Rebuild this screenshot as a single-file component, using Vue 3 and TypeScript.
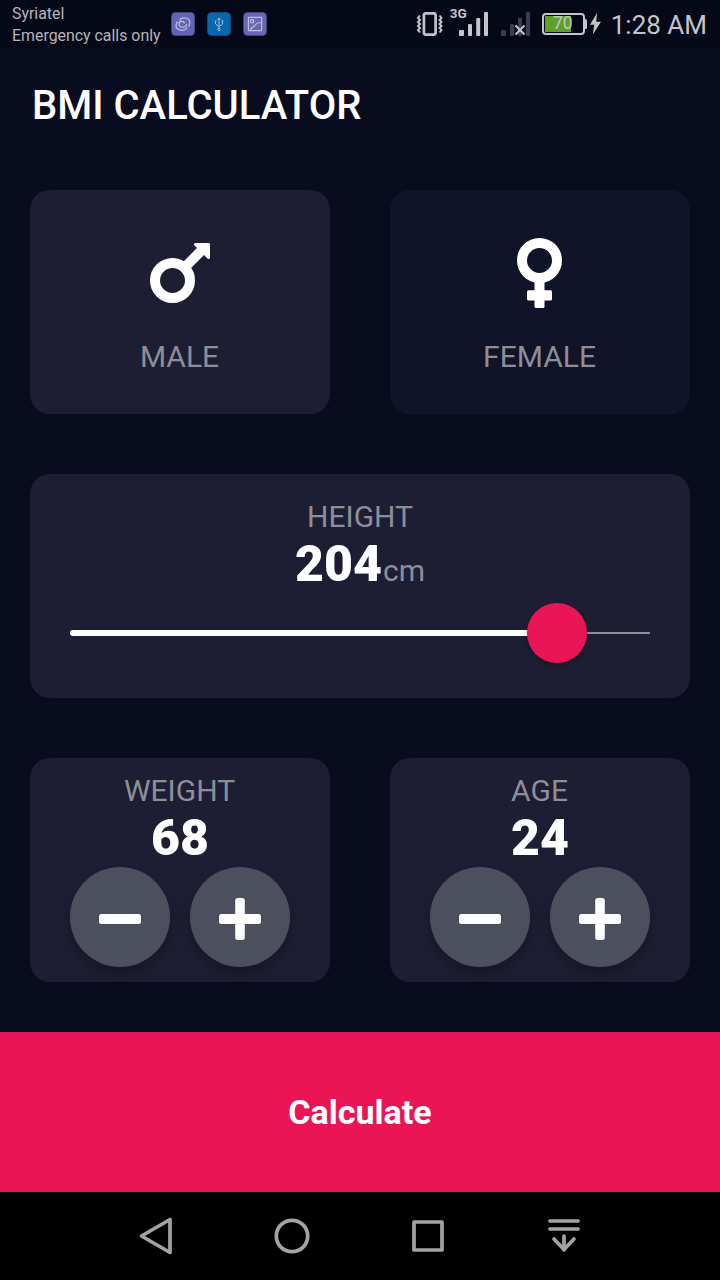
<script setup lang="ts">
import { computed, ref } from 'vue'

type Gender = 'male' | 'female'

const gender = ref<Gender>('male')
const height = ref(204)
const counters = ref([
  { label: 'WEIGHT', value: 68 },
  { label: 'AGE', value: 24 },
])

const minHeight = 120
const maxHeight = 220
const progress = computed(
  () => ((height.value - minHeight) / (maxHeight - minHeight)) * 100,
)
</script>

<template>
  <div class="screen">
    <header class="status">
      <div class="carrier">
        <span>Syriatel</span>
        <span>Emergency calls only</span>
      </div>
      <div class="notices">
        <svg width="24" height="24" viewBox="0 0 24 24" fill="none" stroke="#c1bde0" stroke-width="1.2">
          <rect x=".5" y=".5" width="23" height="23" rx="4" fill="#6265b4" stroke="#464782" stroke-width="1" />
          <path d="M15.500 12c0 2-1.700 3.200-3.700 3.200-2.200 0-3.800-1.400-3.800-3.200 0-1.500 1.200-2.600 2.800-2.600 1.500 0 2.600.9 2.600 2.200" />
          <path d="M8.500 8.500C9.500 6.500 12 5.500 14.500 6c3 .6 4.700 3 4.300 5.600-.2 1.300-.8 2.300-1.600 3" />
          <path d="M16 15.500c-1.500 2.500-4.500 3.300-7.200 2.400-3-1-4.300-3.500-3.500-6 .3-1 .8-1.800 1.500-2.400" />
        </svg>
        <svg width="24" height="24" viewBox="0 0 24 24" fill="none" stroke="#9cbfdd" stroke-width="1">
          <rect x=".5" y=".5" width="23" height="23" rx="4" fill="#0868ae" stroke="#124779" />
          <path d="M12 6v10.500M8.500 9.500v2.500L12 14.500l3.500-2.500V9.500M10.500 8 12 6l1.500 2" />
          <circle cx="12" cy="17.500" r="1.300" />
          <path d="M7.500 9h2M14.500 9h2" />
        </svg>
        <svg width="24" height="24" viewBox="0 0 24 24" fill="none" stroke="#c1bddd" stroke-width="1.200">
          <rect x=".5" y=".5" width="23" height="23" rx="4" fill="#6b67b6" stroke="#47447d" stroke-width="1" />
          <rect x="5.400" y="5.400" width="13.200" height="13.200" rx=".5" />
          <circle cx="9" cy="9.300" r="1.700" />
          <path d="M7.500 18c.5-2 1.500-3 3.500-3.300 1.500-2.700 3.500-4 7-4.200" />
        </svg>
      </div>
      <div class="system">
        <svg class="vibrate" width="28" height="26" viewBox="0 0 28 26" fill="none" stroke="#c3c5c9">
          <rect x="7.900" y="2.400" width="11.700" height="21.200" rx="2" stroke-width="2.700" />
          <path d="M4 4.500 2 7l2 2-2 2 2 2-2 2 2 2-2 2 2 2.500M23.500 4.500l2 2.500-2 2 2 2-2 2 2 2-2 2 2 2-2 2.500" stroke-width="2" />
        </svg>
        <div class="network">
          <span class="generation">3G</span>
          <svg width="30" height="24" viewBox="0 0 30 24" fill="#c3c5c9">
            <rect y="18" width="5" height="6" rx="1" />
            <rect x="9" y="12" width="4" height="12" rx="1" />
            <rect x="17.200" y="6" width="4" height="18" rx="1" />
            <rect x="25" width="4" height="24" rx="1" />
          </svg>
        </div>
        <svg class="nosim" width="30" height="24" viewBox="0 0 30 24" fill="#3b3d4d">
          <rect y="18" width="5" height="6" rx="1" />
          <rect x="9" y="12" width="4" height="12" rx="1" />
          <rect x="17" y="6" width="4" height="18" rx="1" />
          <rect x="25" width="4" height="24" rx="1" />
          <path d="m14.500 13.500 9 9m0-9-9 9" stroke="#c3c5c9" stroke-width="2" />
        </svg>
        <div class="battery">
          <svg width="45" height="22" viewBox="0 0 45 22">
            <rect x="1" y="1" width="41" height="20" rx="3" fill="none" stroke="#c3c5c9" stroke-width="2" />
            <rect x="3" y="3" width="26" height="16" fill="#5fa125" />
            <path d="M42 6h1.500q1.500 0 1.500 1.500v7q0 1.500-1.500 1.500H42z" fill="#c3c5c9" />
          </svg>
          <span class="percent">70</span>
        </div>
        <svg class="bolt" width="11" height="22" viewBox="0 0 11 22" fill="#c3c5c9">
          <path d="M7 0 0 11.800h4.200L2.800 21.500 11 8.800H6.200z" />
        </svg>
        <span class="clock">1:28 AM</span>
      </div>
    </header>

    <h1 class="title">BMI CALCULATOR</h1>

    <main class="body">
      <section class="row">
        <div class="card choice" :class="{ dim: gender !== 'male' }" @click="gender = 'male'">
          <svg width="80" height="80" viewBox="0 0 80 80" fill="#fff">
            <circle cx="32.500" cy="47.500" r="17.500" fill="none" stroke="#fff" stroke-width="10" />
            <path d="M55.300 10H69q1 0 1 1v13.700q0 1.300-1.300 1.300-.7 0-1.200-.5L64 22 48.500 37.500l-7-7L57 15l-2.700-2.700q-.6-.6-.3-1.300.3-1 1.300-1z" />
          </svg>
          <span class="label">MALE</span>
        </div>
        <div class="card choice" :class="{ dim: gender !== 'female' }" @click="gender = 'female'">
          <svg width="80" height="80" viewBox="0 0 80 80" fill="#fff">
            <circle cx="39.500" cy="27.500" r="17.500" fill="none" stroke="#fff" stroke-width="10" />
            <rect x="34.500" y="46" width="10" height="29" rx="1.500" />
            <rect x="27" y="57.300" width="25" height="10.300" rx="1.500" />
          </svg>
          <span class="label">FEMALE</span>
        </div>
      </section>

      <section class="card height">
        <span class="label">HEIGHT</span>
        <div class="reading">
          <span class="number">{{ height }}</span><span class="label">cm</span>
        </div>
        <div class="slider">
          <div class="filled" :style="{ width: progress + '%' }">
            <span class="thumb"></span>
          </div>
        </div>
      </section>

      <section class="row">
        <div v-for="item in counters" :key="item.label" class="card counter">
          <span class="label">{{ item.label }}</span>
          <span class="number">{{ item.value }}</span>
          <div class="buttons">
            <button type="button" @click="item.value--">
              <svg width="42" height="42" viewBox="0 0 42 42" fill="#fff">
                <rect y="16" width="42" height="10" rx="2.500" />
              </svg>
            </button>
            <button type="button" @click="item.value++">
              <svg width="42" height="42" viewBox="0 0 42 42" fill="#fff">
                <rect y="16" width="42" height="10" rx="2.500" />
                <rect x="16.200" width="9.600" height="42" rx="2.500" />
              </svg>
            </button>
          </div>
        </div>
      </section>
    </main>

    <button type="button" class="calculate">Calculate</button>

    <nav class="navbar">
      <svg width="40" height="40" viewBox="0 0 40 40"><path d="M34 3.500v33L5.500 20z" /></svg>
      <svg width="40" height="40" viewBox="0 0 40 40"><circle cx="20" cy="20" r="15.700" /></svg>
      <svg width="40" height="40" viewBox="0 0 40 40"><rect x="6" y="6" width="28" height="28" /></svg>
      <svg width="40" height="40" viewBox="0 0 40 40" stroke-linecap="round">
        <path d="M6 5h28M6 13h28M20 20v14M10 23l10 10.500L30 23" />
      </svg>
    </nav>
  </div>
</template>

<style>
body {
  margin: 0;
  background: #090b1f;
}
</style>

<style scoped>
.screen {
  display: flex;
  flex-direction: column;
  width: 720px;
  height: 1280px;
  overflow: hidden;
  background: #090b1f;
  color: #fff;
  font-family: Roboto, 'Liberation Sans', sans-serif;
}
.status {
  display: flex;
  flex: none;
  height: 48px;
  box-sizing: border-box;
  padding: 0 13px 0 12px;
  background: #050817;
  color: #c3c5c9;
}
.carrier {
  display: flex;
  flex-direction: column;
  width: 159px;
  padding-top: 3px;
  font-size: 15.9px;
  line-height: 22px;
  white-space: nowrap;
  color: #b4b5ba;
}
.notices {
  display: flex;
  gap: 12px;
  padding-top: 12px;
}
.system {
  display: flex;
  align-items: flex-start;
  margin-left: auto;
}
.vibrate {
  margin-top: 11px;
}
.network {
  display: flex;
  margin-left: 6px;
  padding-top: 12px;
}
.generation {
  width: 9px;
  margin-top: -6px;
  font-size: 13.5px;
  font-weight: 700;
  line-height: 15px;
}
.nosim {
  margin: 12px 0 0 12px;
}
.battery {
  position: relative;
  margin: 13px 0 0 11px;
  height: 22px;
}
.percent {
  position: absolute;
  inset: -1px 0 0 -3px;
  font-size: 17.5px;
  line-height: 22px;
  text-align: center;
}
.bolt {
  margin: 13px 0 0 3px;
}
.clock {
  margin-left: 10px;
  font-size: 26px;
  line-height: 50px;
  white-space: nowrap;
}
.title {
  flex: none;
  height: 112px;
  margin: 0;
  padding-left: 32px;
  font-size: 40px;
  font-weight: 500;
  line-height: 116px;
}
.body {
  display: flex;
  flex-direction: column;
  flex: none;
  gap: 60px;
  padding: 30px 30px 50px;
}
.row {
  display: grid;
  grid-template-columns: 1fr 1fr;
  gap: 60px;
}
.card {
  display: flex;
  flex-direction: column;
  align-items: center;
  box-sizing: border-box;
  height: 224px;
  border-radius: 20px;
  background: #1d1e33;
}
.card.dim {
  background: #111328;
}
.choice {
  padding-top: 43px;
}
.choice .label {
  margin-top: 26px;
}
.label {
  font-size: 30px;
  line-height: 35px;
  color: #8d8e98;
}
.row .label {
  padding-right: 1px;
}
.number {
  font-size: 50px;
  font-weight: 900;
  line-height: 60px;
}
.height {
  padding: 25px 40px 0;
}
.reading {
  display: flex;
  align-items: baseline;
  height: 59px;
}
.reading .label {
  padding-left: 1px;
  line-height: 36px;
}
.slider {
  display: flex;
  align-items: center;
  width: 100%;
  height: 80px;
  background: linear-gradient(#8d8e98, #8d8e98) center / 100% 2px no-repeat;
}
.filled {
  position: relative;
  height: 6px;
  border-radius: 3px;
  background: #fff;
}
.thumb {
  position: absolute;
  top: -27px;
  right: -30px;
  width: 60px;
  height: 60px;
  border-radius: 50%;
  background: #eb1555;
  box-shadow: 0 2px 4px rgba(0, 0, 0, 0.3);
}
.counter {
  padding-top: 15px;
}
.buttons {
  display: flex;
  gap: 20px;
  margin-top: -1px;
}
.buttons button {
  display: grid;
  place-items: center;
  width: 100px;
  height: 100px;
  padding: 4px 0 0;
  border: 0;
  border-radius: 50%;
  background: #4c4f5e;
  box-shadow: 0 7px 12px rgba(0, 0, 0, 0.25);
}
.calculate {
  flex: none;
  height: 160px;
  padding: 0;
  border: 0;
  background: #eb1555;
  color: #fff;
  font: 700 34px Roboto, sans-serif;
}
.navbar {
  display: flex;
  justify-content: center;
  align-items: center;
  gap: 96px;
  flex: 1;
  background: #000;
}
.navbar svg {
  fill: none;
  stroke: #a3a3a3;
  stroke-width: 3.7;
  stroke-linejoin: round;
}
</style>
